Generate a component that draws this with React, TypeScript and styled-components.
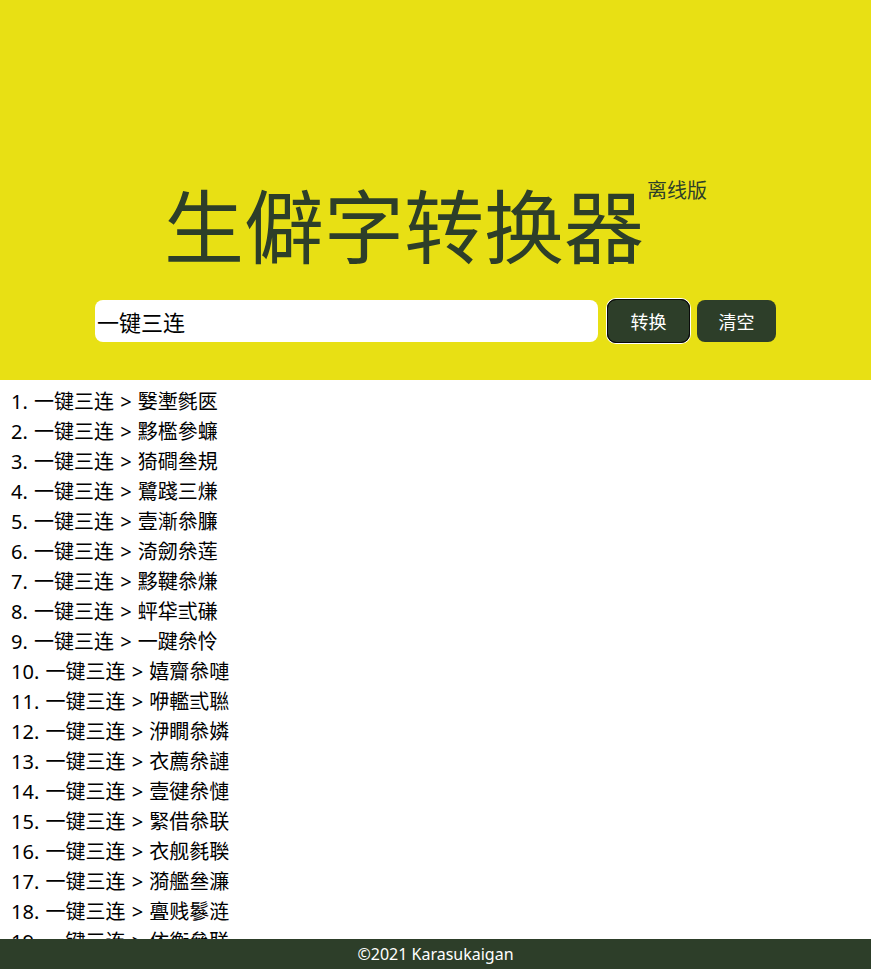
import React, { useState } from 'react';
import styled, { createGlobalStyle } from 'styled-components';

const GlobalStyle = createGlobalStyle`
  html, body {
    margin: 0;
    padding: 0;
    background: #ffffff;
    font-family: 'Noto Sans', 'Noto Sans CJK SC', sans-serif;
  }
`;

const results = [
  '嫛壍毿匧',
  '黟檻參蠊',
  '猗磵叄規',
  '鷺踐三熑',
  '壹漸叅臁',
  '渏劒㕘莲',
  '黟鞬叅熑',
  '蚲牮弎磏',
  '一踺㕘怜',
  '嬉齎叅嗹',
  '咿轞弎聮',
  '洢瞯叅嫾',
  '衣薦㕘謰',
  '壹徤㕘慩',
  '緊借叅联',
  '衣舰毵聫',
  '漪艦叄濂',
  '亹贱鬖涟',
  '依衡叅联',
  '咿檻參漣',
  '壹踐弎連',
];

export default function App() {
  const [text, setText] = useState('一键三连');
  const [list, setList] = useState(results);

  return (
    <>
      <GlobalStyle />
      <Header>
        <Title>
          生僻字转换器<Badge>离线版</Badge>
        </Title>
        <SearchRow>
          <Input value={text} onChange={(e) => setText(e.target.value)} />
          <Button focused onClick={() => setList(results)}>
            转换
          </Button>
          <Button
            onClick={() => {
              setText('');
              setList([]);
            }}
          >
            清空
          </Button>
        </SearchRow>
      </Header>
      <List>
        {list.map((item, index) => (
          <Item key={index}>
            {index + 1}. {text || '一键三连'} &gt; {item}
          </Item>
        ))}
      </List>
      <Footer>©2021 Karasukaigan</Footer>
    </>
  );
}

const Header = styled.header`
  height: 380px;
  background: #e8e014;
  display: flex;
  flex-direction: column;
  align-items: center;
  box-sizing: border-box;
  padding-top: 182px;
`;

const Title = styled.h1`
  margin: 0;
  font-family: 'Noto Sans CJK SC', sans-serif;
  font-size: 80px;
  line-height: 80px;
  font-weight: 400;
  color: #2d3e29;
  position: relative;
  padding-right: 63px;
`;

const Badge = styled.sup`
  position: absolute;
  right: 0;
  top: -4px;
  font-size: 20px;
  line-height: 24px;
  color: #2d3e29;
`;

const SearchRow = styled.div`
  margin-top: 38px;
  display: flex;
  align-items: center;
`;

const Input = styled.input`
  width: 503px;
  height: 42px;
  box-sizing: border-box;
  border: none;
  border-radius: 8px;
  padding: 0 2px;
  font-family: 'Noto Sans CJK SC', sans-serif;
  font-size: 22px;
  color: #000;
  background: #fff;
  outline: none;
`;

const Button = styled.button<{ focused?: boolean }>`
  height: 42px;
  width: 81px;
  margin-left: 10px;
  border: none;
  border-radius: 8px;
  background: #2d3e29;
  color: #fff;
  font-family: 'Noto Sans CJK SC', sans-serif;
  font-size: 18px;
  cursor: pointer;
  outline: ${({ focused }) => (focused ? '1px solid #0a0a0a' : 'none')};
  box-shadow: ${({ focused }) => (focused ? '0 0 0 1px #0a0a0a, 0 0 0 2px #ffffff' : 'none')};

  & + & {
    margin-left: 8px;
    width: 79px;
  }
`;

const List = styled.ul`
  list-style: none;
  margin: 0;
  padding: 7px 0 40px 11px;
`;

const Item = styled.li`
  font-size: 20px;
  line-height: 30px;
  color: #000;
  font-family: 'Noto Sans', 'Noto Sans CJK SC', sans-serif;
  word-spacing: 1px;
`;

const Footer = styled.footer`
  position: fixed;
  left: 0;
  right: 0;
  bottom: 0;
  height: 30px;
  line-height: 30px;
  background: #2d3e29;
  color: #fff;
  text-align: center;
  font-size: 16px;
  font-family: 'Noto Sans', 'Noto Sans CJK SC', sans-serif;
`;
